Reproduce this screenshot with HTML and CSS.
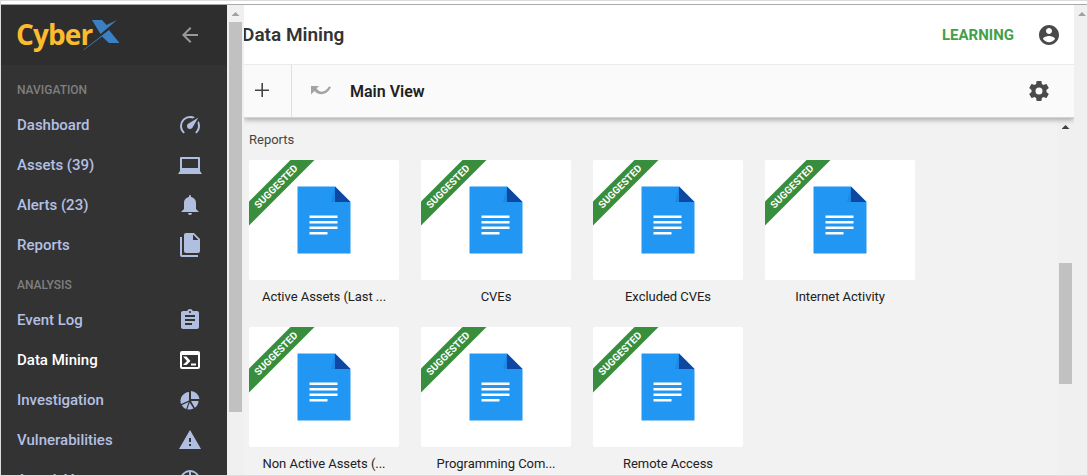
FILE: index.html
```html
<!DOCTYPE html>
<html lang="en">
<head>
<meta charset="utf-8">
<title>Data Mining</title>
<link rel="stylesheet" href="styles.css">
</head>
<body>
<svg width="0" height="0" class="defs">
  <symbol id="doc" viewBox="0 0 54 68">
    <path fill="#2196f3" d="M.5.5H38L53.500 16V67.500H.500z"/>
    <path fill="#1e88e5" d="M38 1v15h-4z"/>
    <path fill="#0d47a1" d="M38 .5 53.500 16H38z"/>
    <path fill="#fff" d="M12.500 29.500h28v2.500h-28zM12.500 35h28v2.500h-28zM12.500 40.500h28v2.500h-28zM12.500 46h18v2.500h-18z"/>
  </symbol>
</svg>
<div class="frame">
  <aside class="sidebar">
    <div class="brand">
      <div class="logo"><span class="logo-text">Cyber</span><svg class="logo-x" width="38" height="32" viewBox="0 0 38 32"><path fill="#3b80c3" d="M9 1h10l4.500 5L34 1 17.500 15zM26 11l10.500 13H26l-7-6.500L1 31H0z"/></svg></div>
      <svg class="back" width="24" height="24" viewBox="0 0 24 24"><path fill="#999" d="M20 11H7.830l5.590-5.590L12 4l-8 8 8 8 1.410-1.410L7.830 13H20v-2z"/></svg>
    </div>
    <h2 class="section first">NAVIGATION</h2>
    <a class="item">Dashboard<svg viewBox="0 0 24 24"><path d="M12,16A3,3 0 0,1 9,13C9,11.880 9.610,10.900 10.500,10.390L20.210,4.770L14.680,14.350C14.180,15.330 13.170,16 12,16M12,3C13.810,3 15.500,3.500 16.970,4.320L14.870,5.530C14,5.190 13,5 12,5A8,8 0 0,0 4,13C4,15.210 4.890,17.210 6.340,18.650H6.350C6.740,19.040 6.740,19.670 6.350,20.060C5.960,20.450 5.320,20.450 4.930,20.070V20.070C3.120,18.260 2,15.760 2,13A10,10 0 0,1 12,3M22,13C22,15.760 20.880,18.260 19.070,20.070V20.070C18.680,20.450 18.050,20.450 17.660,20.060C17.270,19.670 17.270,19.040 17.660,18.650V18.650C19.110,17.200 20,15.210 20,13C20,12 19.810,11 19.460,10.100L20.670,8C21.500,9.500 22,11.180 22,13Z"/></svg></a>
    <a class="item">Assets (39)<svg viewBox="0 0 24 24"><path d="M22 18V5a1 1 0 0 0-1-1H3a1 1 0 0 0-1 1v13l-2 3h24zM4 6h16v9H4z"/></svg></a>
    <a class="item">Alerts (23)<svg viewBox="0 0 24 24"><path d="M14,20A2,2 0 0,1 12,22A2,2 0 0,1 10,20H14M12,2A1,1 0 0,1 13,3V4.080C15.840,4.560 18,7.030 18,10V16L21,19H3L6,16V10C6,7.030 8.160,4.560 11,4.080V3A1,1 0 0,1 12,2Z"/></svg></a>
    <a class="item">Reports<svg viewBox="0 0 24 24"><path d="M16 0H8a2 2 0 0 0-2 2v16a2 2 0 0 0 2 2h12a2 2 0 0 0 2-2V6zM15 7V1.500L20.500 7zM4 4H2v18a2 2 0 0 0 2 2h16v-2H4z"/></svg></a>
    <h2 class="section">ANALYSIS</h2>
    <a class="item">Event Log<svg viewBox="0 0 24 24"><path d="M19 3h-4.180C14.400 1.840 13.300 1 12 1s-2.400.840-2.820 2H5c-1.100 0-2 .9-2 2v14c0 1.100.9 2 2 2h14c1.100 0 2-.9 2-2V5c0-1.100-.9-2-2-2zm-7 0c.550 0 1 .450 1 1s-.450 1-1 1-1-.450-1-1 .450-1 1-1zm2 14H7v-2h7v2zm3-4H7v-2h10v2zm0-4H7V7h10v2z"/></svg></a>
    <a class="item active">Data Mining<svg viewBox="0 0 24 24"><path fill-rule="evenodd" d="M20 3H4a2 2 0 0 0-2 2v14a2 2 0 0 0 2 2h16a2 2 0 0 0 2-2V5a2 2 0 0 0-2-2zM4 7h16v12H4zM5 8.500h3.500l4 4.500-4 4H5l4-4zM13 15.500h5v2h-5z"/></svg></a>
    <a class="item">Investigation<svg viewBox="0 0 24 24"><path d="M13 3v8h8.500a9 9 0 0 0-8.500-8zM11 4v8.500L3 16A9 9 0 0 1 11 4zM3.700 17.200l7-3.200-2.500 7a9 9 0 0 1-4.500-3.800zM11.700 14.500l3.800 6a9 9 0 0 1-6.200.8zM13 13h7.500a8.500 8.500 0 0 1-3.700 6.800z"/></svg></a>
    <a class="item">Vulnerabilities<svg viewBox="0 0 24 24"><path d="M1 21h22L12 2 1 21zm12-3h-2v-2h2v2zm0-4h-2v-4h2v4z"/></svg></a>
    <a class="item">Attack Vectors<svg viewBox="0 0 24 24"><path fill-rule="evenodd" d="M12 2a10 10 0 1 0 0 20 10 10 0 0 0 0-20zM11 4.100V8a4 4 0 0 0-3 3H4.100A8 8 0 0 1 11 4.100zM13 4.100a8 8 0 0 1 6.900 6.900H16a4 4 0 0 0-3-3z"/></svg></a>
  </aside>
  <div class="scroll side-scroll"><i class="arrow"></i><i class="thumb"></i></div>
  <main class="main">
    <header class="header">
      <h1 class="title">Data Mining</h1>
      <span class="status">LEARNING</span>
      <svg width="24" height="24" viewBox="0 0 24 24"><path fill="#4a4a4a" d="M12 2C6.480 2 2 6.480 2 12s4.480 10 10 10 10-4.480 10-10S17.520 2 12 2zm0 3c1.660 0 3 1.340 3 3s-1.340 3-3 3-3-1.340-3-3 1.340-3 3-3zm0 14.200c-2.500 0-4.710-1.280-6-3.220.030-1.990 4-3.080 6-3.080 1.990 0 5.970 1.090 6 3.080-1.290 1.940-3.500 3.220-6 3.220z"/></svg>
    </header>
    <div class="toolbar">
      <div class="add"><svg width="24" height="24" viewBox="0 0 24 24"><path fill="#444" d="M19 12h-6v6h-1.600v-6H5v-1.600h6.400V4H13v6.400h6z"/></svg></div>
      <svg class="undo" width="20" height="10" viewBox="0 0 20 10"><path fill="#a3a3a3" d="M0 0h8L5.500 2.500C8.500 7 14 7 18 .500L20 1C16 9.500 8 10 3.500 5L0 8.500z"/></svg>
      <h2 class="view">Main View</h2>
      <svg class="gear" width="24" height="24" viewBox="0 0 24 24"><path fill="#4a4a4a" d="M12,15.500A3.500,3.500 0 0,1 8.500,12A3.500,3.500 0 0,1 12,8.500A3.500,3.500 0 0,1 15.500,12A3.500,3.500 0 0,1 12,15.500M19.430,12.970C19.470,12.650 19.500,12.330 19.500,12C19.500,11.670 19.470,11.340 19.430,11L21.540,9.370C21.730,9.220 21.780,8.950 21.660,8.730L19.660,5.270C19.540,5.050 19.270,4.960 19.050,5.050L16.560,6.050C16.040,5.660 15.500,5.320 14.870,5.070L14.500,2.420C14.460,2.180 14.250,2 14,2H10C9.750,2 9.540,2.180 9.500,2.420L9.130,5.070C8.500,5.320 7.960,5.660 7.440,6.050L4.950,5.050C4.730,4.960 4.460,5.050 4.340,5.270L2.340,8.730C2.210,8.950 2.270,9.220 2.460,9.370L4.570,11C4.530,11.340 4.500,11.670 4.500,12C4.500,12.330 4.530,12.650 4.570,12.970L2.460,14.630C2.270,14.780 2.210,15.050 2.340,15.270L4.340,18.730C4.460,18.950 4.730,19.030 4.950,18.950L7.440,17.940C7.960,18.340 8.500,18.680 9.130,18.930L9.500,21.580C9.540,21.820 9.750,22 10,22H14C14.250,22 14.460,21.820 14.500,21.580L14.870,18.930C15.500,18.670 16.040,18.340 16.560,17.940L19.050,18.950C19.270,19.030 19.540,18.950 19.660,18.730L21.660,15.270C21.780,15.050 21.730,14.780 21.540,14.630L19.430,12.970Z"/></svg>
    </div>
    <div class="body">
      <section class="content">
        <h3 class="group">Reports</h3>
        <div class="grid">
          <div class="card"><div class="tile"><span class="ribbon">SUGGESTED</span><svg width="54" height="68"><use href="#doc"/></svg></div><p>Active Assets (Last ...</p></div>
          <div class="card"><div class="tile"><span class="ribbon">SUGGESTED</span><svg width="54" height="68"><use href="#doc"/></svg></div><p>CVEs</p></div>
          <div class="card"><div class="tile"><span class="ribbon">SUGGESTED</span><svg width="54" height="68"><use href="#doc"/></svg></div><p>Excluded CVEs</p></div>
          <div class="card"><div class="tile"><span class="ribbon">SUGGESTED</span><svg width="54" height="68"><use href="#doc"/></svg></div><p>Internet Activity</p></div>
          <div class="card"><div class="tile"><span class="ribbon">SUGGESTED</span><svg width="54" height="68"><use href="#doc"/></svg></div><p>Non Active Assets (...</p></div>
          <div class="card"><div class="tile"><span class="ribbon">SUGGESTED</span><svg width="54" height="68"><use href="#doc"/></svg></div><p>Programming Com...</p></div>
          <div class="card"><div class="tile"><span class="ribbon">SUGGESTED</span><svg width="54" height="68"><use href="#doc"/></svg></div><p>Remote Access</p></div>
        </div>
      </section>
      <div class="scroll body-scroll"><i class="arrow"></i><i class="thumb"></i></div>
    </div>
  </main>
  <div class="scroll page-scroll"><i class="arrow"></i></div>
</div>
</body>
</html>
```
FILE: styles.css
```css
* { box-sizing: border-box; margin: 0; padding: 0; }
body {
  height: 476px;
  overflow: hidden;
  padding-top: 3px;
  background: #fff;
  border: 1px solid #dcdcdc;
  font-family: Roboto, "Liberation Sans", sans-serif;
}
.defs { display: block; width: 0; height: 0; }
.frame { display: flex; height: 471px; border-top: 1px solid #a9a9a9; overflow: hidden; }

.sidebar { width: 226px; flex: none; background: #333; overflow: hidden; }
.brand { display: flex; justify-content: space-between; height: 60px; padding: 0 25px 0 15px; background: #2e2e2e; }
.logo { display: flex; padding-top: 14px; }
.logo-text { font: 700 28px/30px "Open Sans", sans-serif; color: #fdbc2c; letter-spacing: -0.9px; width: 67px; }
.logo-x { flex: none; }
.back { margin-top: 18px; }
.section { height: 35px; padding-left: 16px; font-size: 12px; font-weight: 500; line-height: 40px; color: #7f7f7f; }
.first { margin-top: 5px; }
.item { display: flex; align-items: center; justify-content: space-between; height: 40px; padding: 0 25px 0 16px; font-size: 15px; font-weight: 500; color: #b3c0e3; }
.item svg { width: 24px; height: 24px; fill: #b0bfe0; }
.active { color: #fff; }
.active svg { fill: #fff; }

.scroll { flex: none; width: 17px; background: #f0f0f0; }
.arrow { display: block; width: 8px; height: 4px; margin: 7px auto 0; background: #a0a0a0; clip-path: polygon(50% 0, 100% 100%, 0 100%); }
.thumb { display: block; width: 13px; margin: 0 auto; background: #c1c1c1; }
.side-scroll .thumb { height: 390px; margin-top: 6px; }
.body-scroll .arrow { background: #404040; }
.body-scroll .thumb { height: 121px; margin-top: 134px; }
.page-scroll { width: 13px; }
.page-scroll .arrow { margin-left: 4px; }

.main { display: flex; flex-direction: column; flex: 1; min-width: 0; background: #f2f2f2; overflow: hidden; }
.header { position: relative; z-index: 1; display: flex; align-items: center; height: 60px; flex: none; padding-right: 13px; background: #fff; border-bottom: 1px solid #ebebeb; overflow: hidden; }
.title { flex: 1; margin-left: -2px; font-size: 19px; font-weight: 600; color: #333; }
.status { margin-right: 23px; font-size: 15px; font-weight: 700; color: #43a047; }
.toolbar { position: relative; display: flex; align-items: center; height: 53px; flex: none; padding-right: 23px; background: #fafafa; border-bottom: 1px solid #d4d4d4; box-shadow: 0 2px 5px rgba(0,0,0,.3); }
.add { display: flex; align-items: center; width: 48px; height: 52px; padding-left: 6px; border-right: 1px solid #e0e0e0; }
.undo { margin-left: 19px; }
.view { flex: 1; margin-left: 19px; font-size: 16px; font-weight: 600; color: #212121; }

.body { display: flex; flex: 1; min-height: 0; }
.content { flex: 1; padding: 14px 0 0 5px; overflow: hidden; }
.group { font-size: 13px; font-weight: 400; line-height: 16px; color: #444; }
.grid { display: grid; grid-template-columns: repeat(4, 150px); grid-auto-rows: 167px; column-gap: 22px; margin-top: 12px; }
.tile { position: relative; display: flex; align-items: center; justify-content: center; height: 120px; background: #fff; border-radius: 2px; overflow: hidden; }
.ribbon { position: absolute; left: -33px; top: 18px; width: 120px; height: 17px; background: #388e3c; color: #fff; font-size: 10px; font-weight: 700; line-height: 17px; text-align: center; transform: rotate(-45deg); }
.card p { padding-top: 8px; font-size: 13px; line-height: 18px; letter-spacing: -0.04px; text-align: center; color: #212121; }
```
